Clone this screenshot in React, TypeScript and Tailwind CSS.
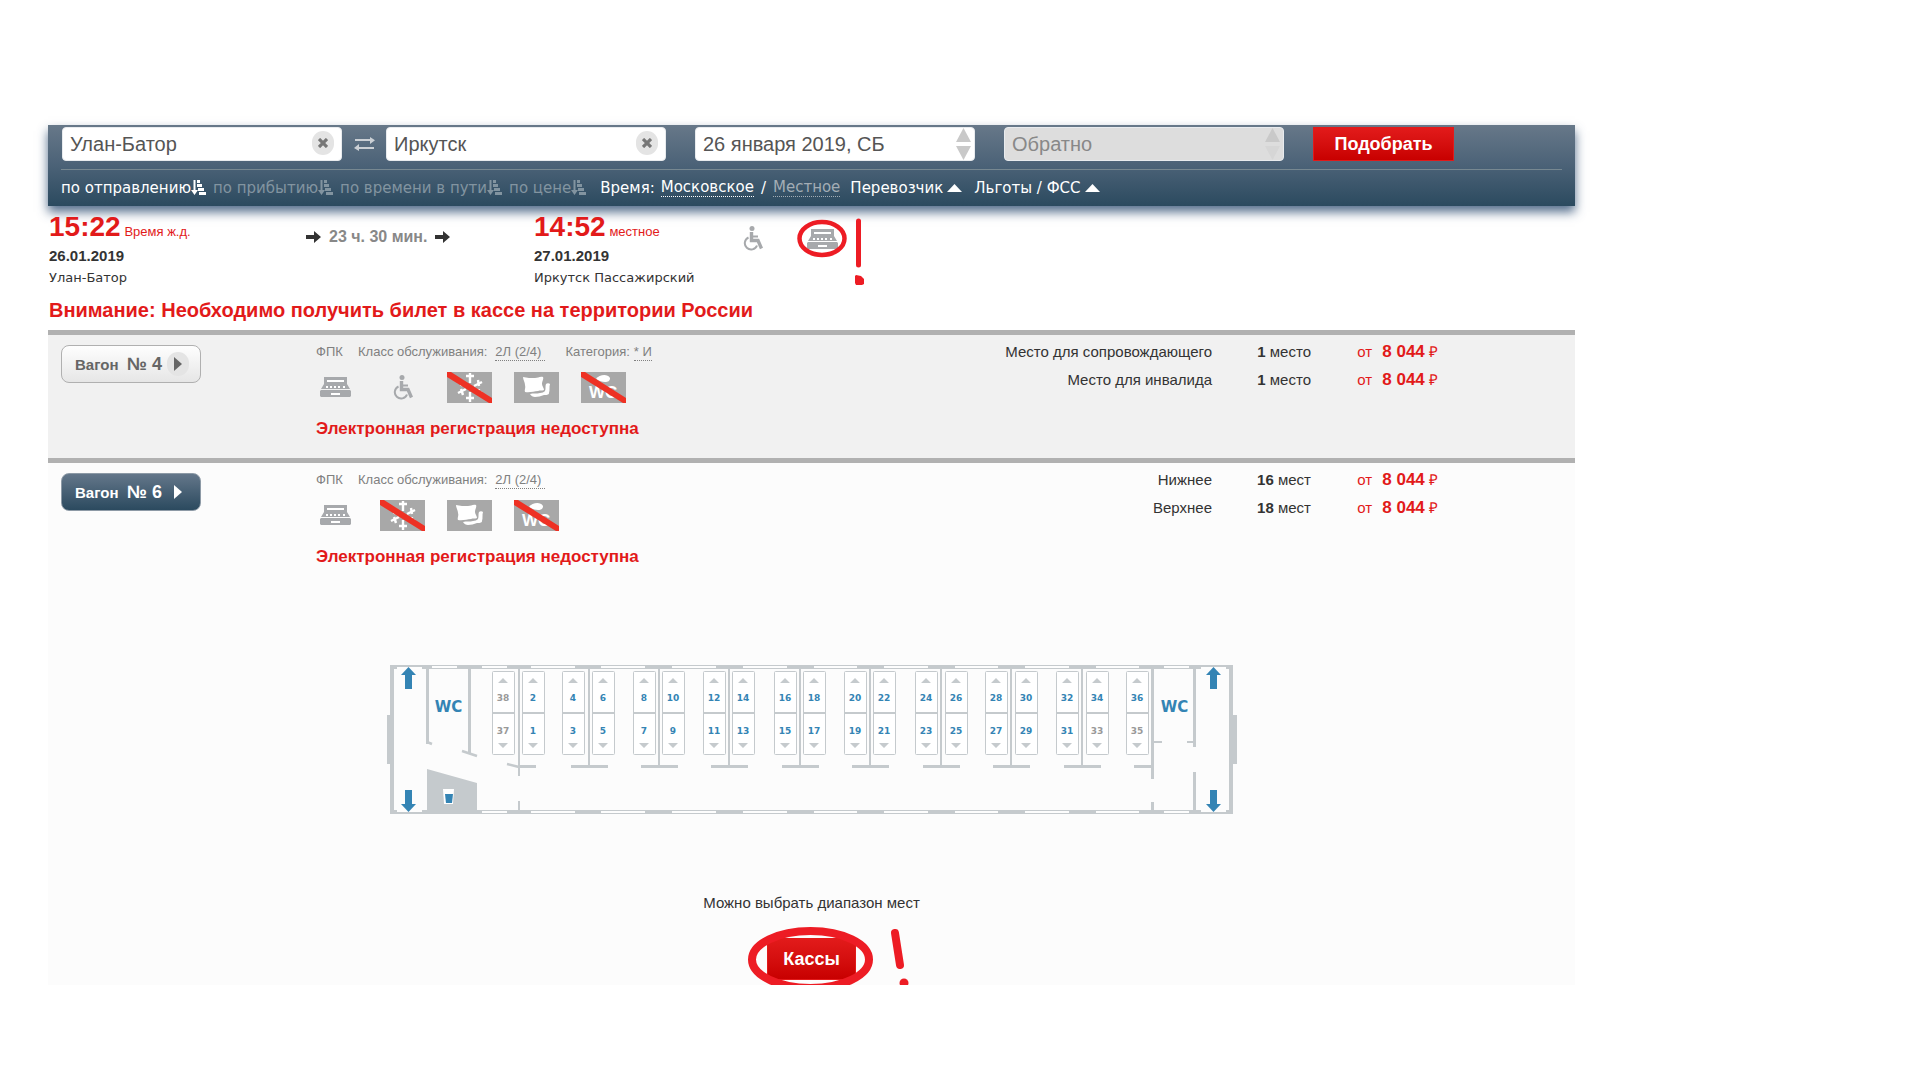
import { useState, type ReactNode } from "react";

type Place = { id: string; name: string; count: number; unit: string };
type Car = {
  number: number;
  category?: string;
  icons: ("register" | "wheelchair" | "climate" | "linen" | "wc")[];
  places: Place[];
};

const cars: Car[] = [
  {
    number: 4,
    category: "* И",
    icons: ["register", "wheelchair", "climate", "linen", "wc"],
    places: [
      { id: "escort", name: "Место для сопровождающего", count: 1, unit: "место" },
      { id: "disabled", name: "Место для инвалида", count: 1, unit: "место" },
    ],
  },
  {
    number: 6,
    icons: ["register", "climate", "linen", "wc"],
    places: [
      { id: "lower", name: "Нижнее", count: 16, unit: "мест" },
      { id: "upper", name: "Верхнее", count: 18, unit: "мест" },
    ],
  },
];

const sorts = ["по отправлению", "по прибытию", "по времени в пути", "по цене"];

function SortIcon() {
  return (
    <svg width="15" height="15" viewBox="0 0 15 15" fill="currentColor">
      <path d="M2.500 0h2v10h2.500l-3.500 5L0 10h2.500z" />
      <path d="M6 0h3v3H6zM6 4h5v3H6zM7 8h6v3H7zM8 12h7v3H8z" />
    </svg>
  );
}

function SwapIcon() {
  return (
    <svg width="21" height="14" viewBox="0 0 21 14" fill="#cbd0d5">
      <path d="M1 2h15V0l5 3.200L16 7V4H1zM20 10H5V7l-5 4 5 3v-2h15z" />
    </svg>
  );
}

function TriangleIcon() {
  return (
    <svg width="15" height="8" viewBox="0 0 15 8" fill="#fff">
      <path d="M0 8L7.500 0 15 8z" />
    </svg>
  );
}

function ArrowIcon() {
  return (
    <svg width="15" height="12" viewBox="0 0 15 12" fill="#333">
      <path d="M0 4h8V0l7 6-7 6V8H0z" />
    </svg>
  );
}

function RegisterIcon() {
  return (
    <svg width="31" height="20" viewBox="0 0 31 20">
      <path d="M4 0h23v7l3 5H1l3-5z" fill="#a7a9ac" />
      <path d="M1 13h29l1 1v5l-1 1H1l-1-1v-5z" fill="#a7a9ac" />
      <path d="M7 3h17v2H7zM6 9h2v2H6zM10 9h2v2h-2zM14 9h2v2h-2zM18 9h2v2h-2zM23 9h2v2h-2zM11 16h9v2h-9z" fill="#fff" />
    </svg>
  );
}

function WheelchairIcon() {
  return (
    <svg width="20" height="25" viewBox="0 0 20 25" fill="none" stroke="#a7a9ac">
      <circle cx="9" cy="2.500" r="2.500" fill="#a7a9ac" stroke="none" />
      <path d="M8.500 6v8.500h6.500l3.500 8" strokeWidth="3.400" />
      <path d="M10 10.500h5" strokeWidth="2" />
      <path d="M5.500 11.500a6.300 6.300 0 1 0 8.500 8" strokeWidth="2" />
    </svg>
  );
}

function Tile({ crossed, children }: { crossed?: boolean; children: ReactNode }) {
  return (
    <svg width="45" height="31" viewBox="0 0 45 31">
      <path d="M0 0h45v31H0z" fill="#a8a8a8" />
      {children}
      {crossed && <path d="M0 0h4l41 26v5h-3L0 5z" fill="#ee3124" />}
    </svg>
  );
}

function ServiceIcon({ name }: { name: Car["icons"][number] }) {
  if (name === "register") return <RegisterIcon />;
  if (name === "wheelchair") return <WheelchairIcon />;
  if (name === "climate") {
    return (
      <Tile crossed>
        <g stroke="#fff" strokeWidth="2.400" fill="none">
          <path d="M23 1v10M23 20v10M11 10l8 4M27 17l8 4M11 21l8-4M27 14l8-4" />
          <path d="M19 4h8M19 26h8M16 8l-2 6M32 17l-1 6M14 17l2 6M31 8l1 6" />
        </g>
      </Tile>
    );
  }
  if (name === "linen") {
    return (
      <Tile>
        <path d="M9 5c4 1 8 1 12 1 3 0 5-2 8-1 1 2-1 4-1 7 0 2 2 4 2 6-2 1-4 0-6 1-4 0-8 2-13 1-1-2 1-4 0-7 0-3-2-5-2-8z" fill="#fff" />
        <path d="M32 12c1-1 3-1 4 0-1 3 0 6-1 9 0 2-3 2-5 2-3 1-6 2-9 2-2 0-4-1-5-3 3-1 7 0 10-1 2 0 4-1 5-2 1-2 0-5 1-7z" fill="#fff" />
      </Tile>
    );
  }
  return (
    <Tile crossed>
      <path d="M15 7c3-4 11-6 14-1 0 3-2 4-5 4-3 0-6-1-9-3z" fill="#fff" />
      <text x="8" y="26" fontSize="17" fontWeight="bold" fill="#fff" className="font-['Liberation_Sans',sans-serif]">
        WC
      </text>
    </Tile>
  );
}

function StepArrows({ disabled }: { disabled?: boolean }) {
  return (
    <svg width="15" height="32" viewBox="0 0 15 32" className="absolute right-1 top-px" fill="#c9c9c9">
      <path d="M0 14L7.500 0 15 14z" />
      <path d="M0 18h15L7.500 32z" fill={disabled ? "#d6d6d6" : "#c9c9c9"} />
    </svg>
  );
}

function CityField({ label, value }: { label: string; value: string }) {
  const [city, setCity] = useState(value);
  return (
    <div className="relative">
      <input
        aria-label={label}
        value={city}
        onChange={(e) => setCity(e.target.value)}
        className="block h-[34px] w-[280px] rounded-sm border border-[#e8ebee] bg-white px-[7px] text-xl leading-none text-[#555]"
      />
      <button
        type="button"
        aria-label="Очистить"
        onClick={() => setCity("")}
        className="absolute right-2 top-1 flex h-6 w-[22px] items-center justify-center rounded-full bg-[#e4e4e4]"
      >
        <svg width="10" height="10" viewBox="0 0 10 10" stroke="#777" strokeWidth="3.200">
          <path d="M1 1l8 8M9 1L1 9" />
        </svg>
      </button>
    </div>
  );
}

const berths = [492, 522, 562, 592, 633, 662, 703, 732, 774, 803, 844, 873, 915, 945, 985, 1015, 1056, 1086, 1126];
const walls = [589, 659, 729, 800, 870, 941, 1011, 1082];
const windows = [
  [482, 25], [531, 44], [601, 44], [672, 44], [743, 44], [814, 43], [884, 44],
  [955, 43], [1025, 44], [1096, 43], [1164, 25],
];
const sold = [33, 35, 37, 38];

function CarPlan() {
  return (
    <svg width="850" height="149" viewBox="387 665 850 149" className="font-['DejaVu_Sans',sans-serif] font-bold" textAnchor="middle">
      <g fill="#c5cacd">
        <path d="M387 715h4v49h-4zM1233 715h4v49h-4zM390 665h4v149h-4zM1229 665h4v149h-4z" />
        <path d="M390 665h843v4H390zM390 810h843v4H390z" />
        <path d="M426 669h3v75h-3zM468 669h3v84h-3zM518 669h2v107h-2zM518 801h2v9h-2z" />
        <path d="M518 765h18v3h-18zM427 769l50 14v28h-50z" />
        <path d="M1151 669h3v110h-3zM1151 802h3v8h-3zM1134 765h18v3h-18z" />
        <path d="M1152 741h10v2h-10zM1187 741h8v2h-8zM1193 669h3v78h-3zM1193 772h3v38h-3z" />
      </g>
      <path d="M427 742l5 2M462 751l15 5M507 764l12 3" stroke="#c5cacd" strokeWidth="2.500" fill="none" />

      <g fill="#fdfdfd">
        <path d="M397 667h25v2h-25zM1201 667h25v2h-25zM397 810h25v2h-25zM1201 810h25v2h-25zM432 666h25v2h-25z" />
        {windows.map(([x, w]) => (
          <path key={x} d={`M${x} 666h${w}v2h${-w}zM${x} 811h${w}v2h${-w}z`} />
        ))}
      </g>

      {walls.map((x) => (
        <path key={x} d={`M${x - 1} 669h2v96h18v3h-37v-3h17z`} fill="#c5cacd" />
      ))}

      {berths.map((x, i) => {
        const upper = i === 0 ? 38 : i * 2;
        const lower = i === 0 ? 37 : i * 2 - 1;
        return (
          <g key={x} fill="#c5cacd" fontSize="9">
            <rect x={x + 0.5} y="671.5" width="22" height="83" rx="1" fill="#fff" stroke="#c5cacd" />
            <path d={`M${x} 712h23v2h-23z`} />
            <path d={`M${x + 6} 683l5-5 5 5zM${x + 6} 743l5 5 5-5z`} />
            <text x={x + 11} y="701" fill={sold.includes(upper) ? "#999" : "#3484b4"}>{upper}</text>
            <text x={x + 11} y="734" fill={sold.includes(lower) ? "#999" : "#3484b4"}>{lower}</text>
          </g>
        );
      })}

      <g fill="#3484b4">
        {[408.5, 1213.5].map((x) => (
          <path key={x} d={`M${x} 667l7.500 8h-4v14h-7v-14h-4zM${x} 812l7.500-8h-4v-14h-7v14h-4z`} />
        ))}
        <text x="448.500" y="712" fontSize="15">WC</text>
        <text x="1174.500" y="712" fontSize="15">WC</text>
      </g>
      <path d="M443 789h11l-1 15h-9z" fill="#fff" />
      <path d="M445 794h8l-1 9h-6z" fill="#3484b4" />
    </svg>
  );
}

function CarInfo({ car, active, onSelect }: { car: Car; active: boolean; onSelect: () => void }) {
  return (
    <div className="flex items-start">
      <div className="w-[265px] shrink-0 pt-[10px] pl-[13px]">
        <button
          onClick={onSelect}
          className={
            active
              ? "flex h-[38px] w-[140px] items-center rounded-lg border border-[#8d9aa6] bg-linear-to-b from-[#64778a] to-[#2b4a5f] pl-[13px] font-bold text-white"
              : "flex h-[38px] w-[140px] items-center rounded-lg border border-[#b0b0b0] bg-linear-to-b from-[#fefefe] to-[#e6e6e6] pl-[13px] font-bold text-[#666]"
          }
        >
          <span className="w-[52px] pt-[2px] text-left text-[15px]">Вагон</span>
          <span className="text-lg">№ {car.number}</span>
          <span
            className={
              active
                ? "ml-[5px] flex h-6 w-[22px] items-center justify-center"
                : "ml-[5px] flex h-6 w-[22px] items-center justify-center rounded-full bg-[#e4e4e4]"
            }
          >
            <svg width="8" height="14" viewBox="0 0 8 14" fill="currentColor">
              <path d="M0 0l8 7-8 7z" />
            </svg>
          </span>
        </button>
      </div>

      <div className="flex-1 pt-[8px]">
        <p className="flex pl-[3px] text-[13px] leading-[18px] text-[#808080]">
          <span className="w-[42px]">ФПК</span>
          <span className="mr-2">Класс обслуживания:</span>
          <a href="#class" className="mr-5 h-[18px] border-b border-dotted border-[#808080] pr-1">2Л (2/4)</a>
          {car.category && (
            <>
              <span className="mr-1">Категория:</span>
              <a href="#category" className="h-[18px] border-b border-dotted border-[#808080]">{car.category}</a>
            </>
          )}
        </p>
        <div className="mt-[9px] flex h-[34px] items-center gap-[22px]">
          {car.icons.map((icon) => (
            <span key={icon} className="flex w-[45px] justify-center">
              <ServiceIcon name={icon} />
            </span>
          ))}
        </div>
        <p className="mt-[13px] pl-[3px] text-[17px] leading-6 font-bold text-[#e21a1a]">Электронная регистрация недоступна</p>
      </div>

      <table className="mt-[3px] mr-[137px] text-[15px] text-[#333]">
        <tbody>
          {car.places.map((place) => (
            <tr key={place.id} className="h-7">
              <td className="text-right">{place.name}</td>
              <td className="w-[99px] text-right">
                <b>{place.count}</b> {place.unit}
              </td>
              <td className="w-[127px] text-right text-[#e21a1a]">
                от <b className="ml-[6px] text-[17px] leading-5">8 044</b> ₽
              </td>
            </tr>
          ))}
        </tbody>
      </table>
    </div>
  );
}

export default function App() {
  const [sort, setSort] = useState(sorts[0]);
  const [activeCar, setActiveCar] = useState(6);

  return (
    <div className="min-h-screen bg-white pt-[125px] pr-[345px] pl-12 font-['Liberation_Sans',sans-serif] text-[#333]">
      <header className="h-[81px] bg-linear-to-b from-[#677889] via-[#4b6277] to-[#2b4a5f] px-[13px] pt-[2px] shadow-[0_6px_10px_#2b4a6fcc]">
        <form className="flex pl-px" onSubmit={(e) => e.preventDefault()}>
          <CityField label="Откуда" value="Улан-Батор" />
          <button type="button" aria-label="Поменять местами" className="flex w-11 items-center justify-center">
            <SwapIcon />
          </button>
          <CityField label="Куда" value="Иркутск" />
          <div className="relative ml-[29px]">
            <input
              aria-label="Дата отправления"
              defaultValue="26 января 2019, СБ"
              className="block h-[34px] w-[280px] rounded-sm border border-[#e8ebee] bg-white px-[7px] text-xl leading-none text-[#555]"
            />
            <StepArrows />
          </div>
          <div className="relative ml-[29px]">
            <input
              aria-label="Дата возвращения"
              placeholder="Обратно"
              className="block h-[34px] w-[280px] rounded-sm border border-[#e8ebee] bg-[#ddd] px-[7px] text-xl leading-none placeholder:text-[#888]"
            />
            <StepArrows disabled />
          </div>
          <button className="ml-[29px] h-[34px] w-[141px] border border-[#e21a1a] bg-linear-to-b from-[#e21a1a] to-[#c80000] text-lg font-bold text-white">
            Подобрать
          </button>
        </form>

        <nav className="mt-2 flex h-[36px] items-center border-t border-[#778891] font-['DejaVu_Sans',sans-serif] text-[15px] leading-5 text-white">
          {sorts.map((item) => (
            <button
              key={item}
              onClick={() => setSort(item)}
              className={item === sort ? "mr-[7px] flex items-center text-white" : "mr-[7px] flex items-center text-[#8294a0]"}
            >
              {item}
              <SortIcon />
            </button>
          ))}
          <span className="ml-[7px]">Время:</span>
          <a href="#moscow" className="ml-[6px] h-[19px] border-b border-dotted border-white leading-[19px]">Московское</a>
          <span className="mx-[7px]">/</span>
          <a href="#local" className="h-[19px] border-b border-dotted border-[#a3adb5] leading-[19px] text-[#a3adb5]">Местное</a>
          <button className="ml-[10px] flex items-center gap-1">
            Перевозчик
            <TriangleIcon />
          </button>
          <button className="ml-3 flex items-center gap-1">
            Льготы / ФСС
            <TriangleIcon />
          </button>
        </nav>
      </header>

      <section className="grid grid-cols-[257px_228px_209px_1fr] pt-[4px] pl-px">
        <div>
          <p className="text-[28px] leading-[34px] font-bold text-[#e21a1a]">
            15:22 <span className="-ml-1 text-[13px] leading-none font-normal">Время ж.д.</span>
          </p>
          <p className="text-[15px] leading-6 font-bold">26.01.2019</p>
          <p className="font-['DejaVu_Sans',sans-serif] text-[13px] leading-5">Улан-Батор</p>
        </div>
        <div className="mt-[17px] flex h-5 items-center gap-2 text-base font-bold text-[#888]">
          <ArrowIcon />
          23 ч. 30 мин.
          <ArrowIcon />
        </div>
        <div>
          <p className="text-[28px] leading-[34px] font-bold text-[#e21a1a]">
            14:52 <span className="-ml-1 text-[13px] leading-none font-normal">местное</span>
          </p>
          <p className="text-[15px] leading-6 font-bold">27.01.2019</p>
          <p className="font-['DejaVu_Sans',sans-serif] text-[13px] leading-5">Иркутск Пассажирский</p>
        </div>
        <div className="relative mt-4 flex h-[25px] items-center gap-11 self-start">
          <WheelchairIcon />
          <RegisterIcon />
          <svg width="70" height="70" viewBox="797 218 70 70" className="absolute left-[54px] -top-2" fill="none" stroke="#ed1c24">
            <ellipse cx="822" cy="238.500" rx="22.500" ry="16.500" strokeWidth="4.500" />
            <path d="M858.500 221v44" strokeWidth="5" strokeLinecap="round" />
            <path d="M856 275l5 1 3 3v5l-2 1h-6l-1-2v-7z" fill="#ed1c24" stroke="none" />
          </svg>
        </div>
      </section>

      <p className="mt-[7px] pl-px text-xl leading-[30px] font-bold text-[#e21a1a]">
        Внимание: Необходимо получить билет в кассе на территории России
      </p>

      <section className="mt-[5px] h-32 border-t-[5px] border-[#b1b1b1] bg-[#f1f1f1]">
        <CarInfo car={cars[0]} active={activeCar === 4} onSelect={() => setActiveCar(4)} />
      </section>
      <section className="h-[527px] overflow-hidden border-t-[5px] border-[#b1b1b1] bg-[#fcfcfc]">
        <CarInfo car={cars[1]} active={activeCar === 6} onSelect={() => setActiveCar(6)} />
        <div className="mt-24 flex flex-col items-center">
          <CarPlan />
          <p className="mt-[79px] text-[15px] leading-5">Можно выбрать диапазон мест</p>
          <div className="relative mt-[25px]">
            <button className="block h-[42px] w-[89px] border border-[#e21a1a] bg-linear-to-b from-[#e21a1a] to-[#c80000] text-lg font-bold text-white">
              Кассы
            </button>
            <svg width="170" height="60" viewBox="747 926 170 60" className="pointer-events-none absolute -top-3 -left-5" fill="none" stroke="#ed1c24" strokeWidth="8">
              <ellipse cx="810.500" cy="959.500" rx="58.500" ry="28.500" />
              <path d="M895 933l5 32" strokeLinecap="round" />
              <circle cx="904" cy="983" r="4.500" fill="#ed1c24" stroke="none" />
            </svg>
          </div>
        </div>
      </section>
    </div>
  );
}
